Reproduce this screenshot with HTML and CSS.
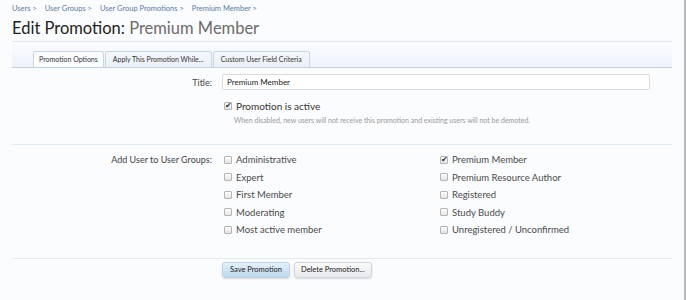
FILE: index.html
```html
<!DOCTYPE html>
<html lang="en">
  <head>
    <meta charset="UTF-8" />
    <meta name="viewport" content="width=device-width, initial-scale=1.0" />
    <title>Edit Promotion: Premium Member</title>
    <link rel="stylesheet" href="styles.css">
  </head>
  <body>
    <div class="page">
      <div class="content">
        <nav class="breadcrumb">
          <a href="#">Users &gt;</a>
          <a href="#">User Groups &gt;</a>
          <a href="#">User Group Promotions &gt;</a>
          <a href="#">Premium Member &gt;</a>
        </nav>

        <h1 class="title">Edit Promotion: <span class="title-name">Premium Member</span></h1>

        <div class="tabbar">
          <span class="tab active">Promotion Options</span>
          <span class="tab">Apply This Promotion While...</span>
          <span class="tab">Custom User Field Criteria</span>
        </div>

        <div class="fieldset">
          <div class="row row-title">
            <label class="label">Title:</label>
            <div class="control">
              <input class="textbox" type="text" value="Premium Member" />
            </div>
          </div>

          <div class="row row-active">
            <div class="label"></div>
            <div class="control">
              <label class="check check-main"><span class="box checked"></span>Promotion is active</label>
              <p class="hint">When disabled, new users will not receive this promotion and existing users will not be demoted.</p>
            </div>
          </div>
        </div>

        <div class="fieldset groups-set">
          <div class="row">
            <div class="label label-groups">Add User to User Groups:</div>
            <div class="control groups">
              <label class="check"><span class="box"></span>Administrative</label>
              <label class="check"><span class="box checked"></span>Premium Member</label>
              <label class="check"><span class="box"></span>Expert</label>
              <label class="check"><span class="box"></span>Premium Resource Author</label>
              <label class="check"><span class="box"></span>First Member</label>
              <label class="check"><span class="box"></span>Registered</label>
              <label class="check"><span class="box"></span>Moderating</label>
              <label class="check"><span class="box"></span>Study Buddy</label>
              <label class="check"><span class="box"></span>Most active member</label>
              <label class="check"><span class="box"></span>Unregistered / Unconfirmed</label>
            </div>
          </div>
        </div>

        <div class="submit-row">
          <button class="button primary">Save Promotion</button>
          <button class="button">Delete Promotion...</button>
        </div>
      </div>
    </div>
  </body>
</html>
```

FILE: styles.css
```css
html,
body {
  margin: 0;
  padding: 0;
}

body {
  font-family: "Lato", "Open Sans", sans-serif;
  background-color: #fbfcfe;
  color: #333333;
}

.page {
  width: 684px;
  height: 300px;
  border-right: 2px solid #b9b9b9;
  overflow: hidden;
}

.content {
  margin: 0 12px;
}

.breadcrumb {
  display: flex;
  gap: 8px;
  padding-top: 4px;
  font-size: 7.5px;
  line-height: 10px;
}

.breadcrumb a {
  color: #5a79a5;
  text-decoration: none;
}

.title {
  margin: 3px 0 0 0;
  padding-bottom: 2px;
  font-size: 16.5px;
  font-weight: normal;
  line-height: 22px;
  color: #222222;
  border-bottom: 1px solid #e1e8ef;
}

.title-name {
  color: #6b6b6b;
}

.tabbar {
  display: flex;
  height: 25px;
  align-items: flex-end;
  padding-left: 21px;
  background: linear-gradient(to bottom, #fbfcfe, #edf3f9);
  border-bottom: 1px solid #c3d2de;
}

.tab {
  height: 15px;
  line-height: 15px;
  padding: 0 7px;
  margin-right: 1px;
  font-size: 7px;
  color: #333333;
  background: linear-gradient(to bottom, #f5f8fb, #e9f0f6);
  border: 1px solid #c9d6e2;
  border-bottom: none;
  border-radius: 3px 3px 0 0;
}

.tab.active {
  padding: 0 5px;
  background: #fcfdfe;
}

.fieldset {
  border-bottom: 1px solid #e3ebf2;
  padding: 6px 0 19px 0;
}

.row {
  display: grid;
  grid-template-columns: 200px 1fr;
  column-gap: 10px;
}

.label {
  text-align: right;
  font-size: 9px;
  color: #444444;
}

.row-title {
  align-items: center;
}

.row-title .control {
  display: flex;
}

.textbox {
  box-sizing: border-box;
  width: 428px;
  height: 16px;
  padding: 0 4px;
  font-family: inherit;
  font-size: 8px;
  color: #222222;
  background: #ffffff;
  border: 1px solid #dcdcdc;
  border-radius: 2px;
  outline: none;
}

.row-active {
  margin-top: 10px;
}

.check {
  display: flex;
  align-items: center;
  gap: 4px;
  height: 17.5px;
  padding-left: 2px;
  font-size: 9.5px;
  color: #4a4a4a;
}

.check-main {
  height: 12px;
  font-size: 10px;
  color: #333333;
}

.box {
  box-sizing: border-box;
  width: 8px;
  height: 8px;
  border: 1px solid #b5b5b5;
  border-radius: 1px;
  background: linear-gradient(to bottom, #fdfdfd, #e4e4e4);
  position: relative;
}

.box.checked::after {
  content: "\2714";
  position: absolute;
  left: 0;
  top: -3px;
  font-size: 8px;
  line-height: 10px;
  color: #333333;
}

.hint {
  margin: 4px 0 0 12px;
  font-size: 7px;
  line-height: 9px;
  color: #999999;
}

.groups-set {
  padding: 6px 0 19px 0;
}

.label-groups {
  line-height: 17.5px;
}

.groups {
  display: grid;
  grid-template-columns: 216px 216px;
}

.submit-row {
  display: flex;
  gap: 4px;
  padding: 3px 0 0 210px;
}

.button {
  height: 16px;
  padding: 0 6px;
  font-family: inherit;
  font-size: 7.5px;
  color: #222222;
  background: linear-gradient(to bottom, #fbfbfb, #e6e8ec);
  border: 1px solid #d3d7dd;
  border-radius: 3px;
  box-shadow: 0 1px 2px rgba(0, 0, 0, 0.15);
}

.button.primary {
  padding: 0 7px;
  background: linear-gradient(to bottom, #e4f0f9, #bcd8ee);
  border-color: #c2d4e4;
}
```
